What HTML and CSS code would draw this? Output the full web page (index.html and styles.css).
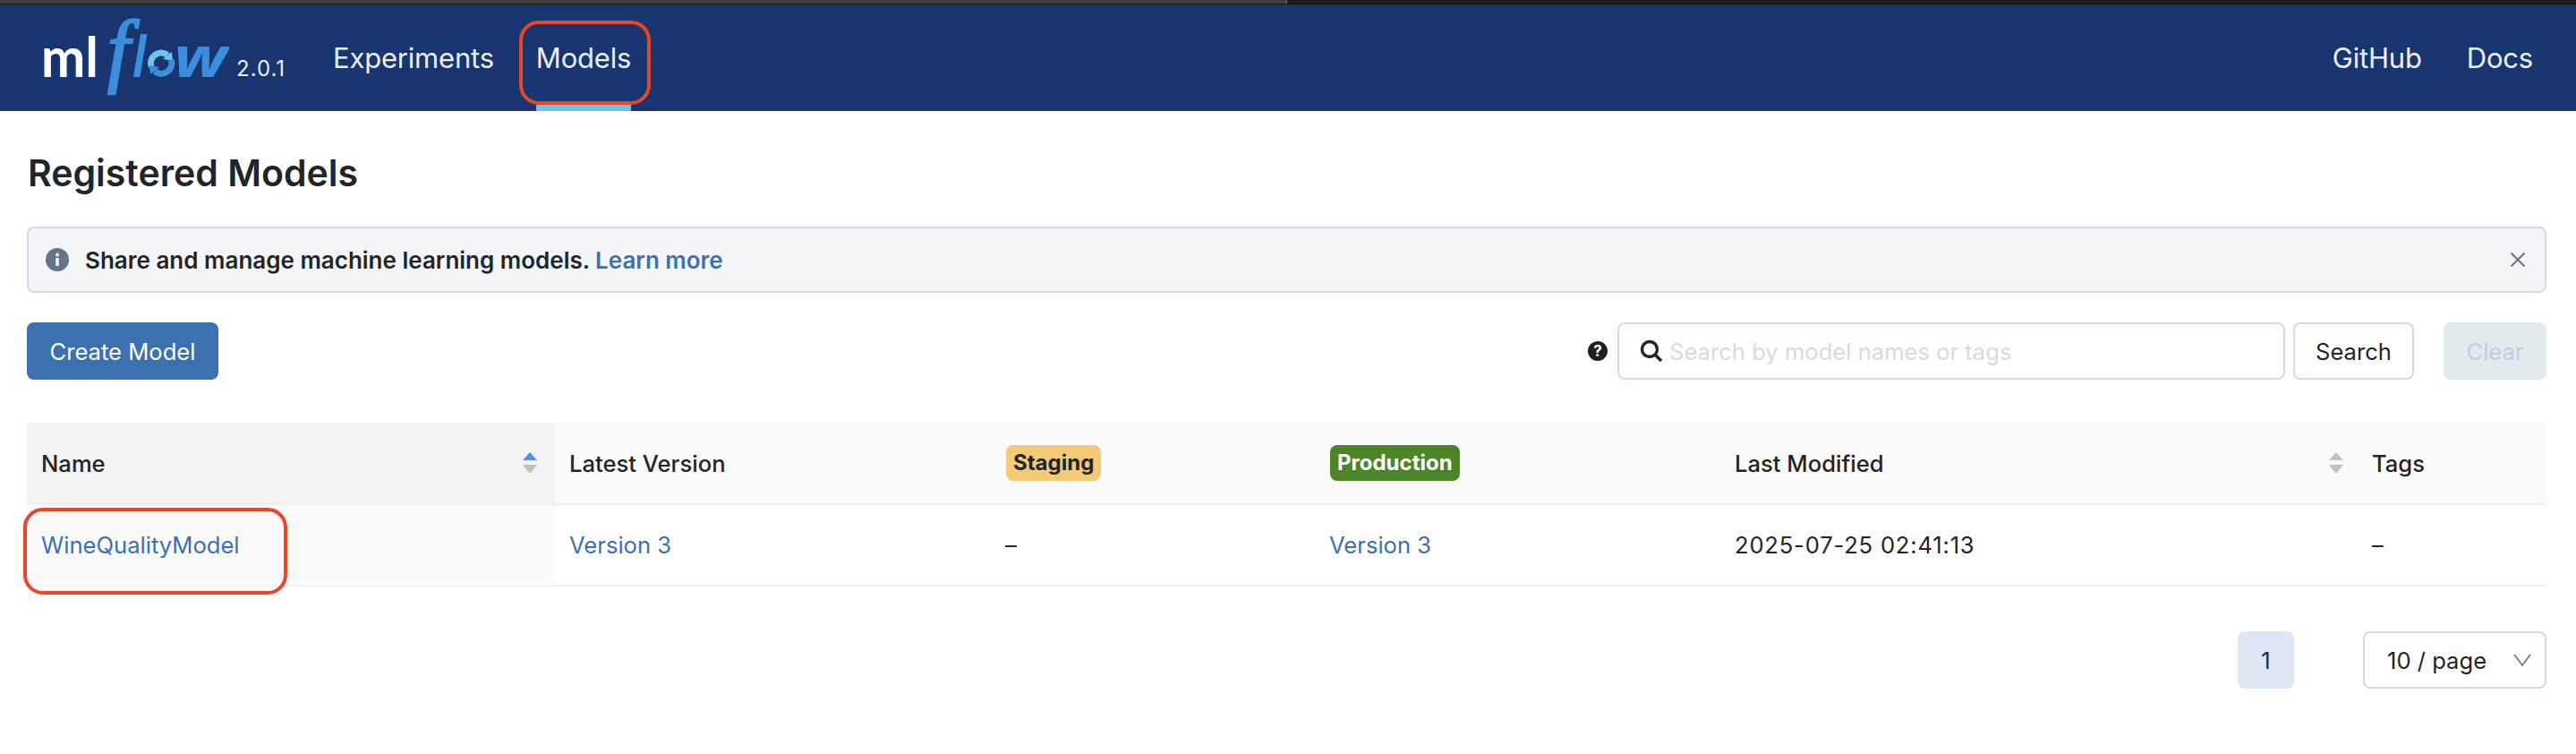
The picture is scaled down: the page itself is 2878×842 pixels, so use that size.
FILE: index.html

```html
<!DOCTYPE html>
<html lang="en">
<head>
  <meta charset="UTF-8">
  <meta name="viewport" content="width=device-width, initial-scale=1.0">
  <title>MLflow - Registered Models</title>
  <link rel="stylesheet" href="styles.css">
</head>
<body>
  <div class="topstrip"></div>

  <header class="header">
    <a class="logo" href="#">
      <svg class="logo-mark" width="210" height="119" viewBox="0 -19 210 119" role="img" aria-label="mlflow">
        <text class="logo-ml" x="0" y="62" textLength="64" lengthAdjust="spacingAndGlyphs">ml</text>
        <text class="logo-f" x="74" y="62">f</text>
        <text class="logo-l" x="102" y="62" textLength="15" lengthAdjust="spacingAndGlyphs">l</text>
        <path class="logo-ring-light" d="M123.2 50.4A11.5 11.5 0 0 1 141.4 37.7"/>
        <path class="logo-arrow-light" d="M136 42l10-8 1 10z"/>
        <path class="logo-ring-dark" d="M145.2 43A11.5 11.5 0 0 1 127 55.6"/>
        <path class="logo-arrow-dark" d="M132 51l-10 8-1-10z"/>
        <text class="logo-w" x="148" y="62" textLength="60" lengthAdjust="spacingAndGlyphs">w</text>
      </svg>
      <span class="version">2.0.1</span>
    </a>
    <nav class="nav nav-left">
      <a class="nav-link" href="#">Experiments</a>
      <a class="nav-link active" href="#">Models<span class="callout callout-nav"></span></a>
    </nav>
    <nav class="nav nav-right">
      <a class="nav-link" href="#">GitHub</a>
      <a class="nav-link" href="#">Docs</a>
    </nav>
  </header>

  <main class="main">
    <h1 class="title">Registered Models</h1>

    <div class="alert">
      <svg class="alert-icon" width="26" height="26" viewBox="0 0 26 26">
        <circle cx="13" cy="13" r="13" fill="#64748b"/>
        <circle cx="13" cy="7.5" r="2" fill="#f3f5f7"/>
        <rect x="11.2" y="11" width="3.6" height="9" rx="1" fill="#f3f5f7"/>
      </svg>
      <span class="alert-text">Share and manage machine learning models. <a href="#">Learn more</a></span>
      <svg class="alert-close" width="16" height="16" viewBox="0 0 16 16">
        <path d="M.5.5l15 15M15.5.5l-15 15" fill="none" stroke="#64748b" stroke-width="2"/>
      </svg>
    </div>

    <div class="toolbar">
      <button class="btn btn-primary">Create Model</button>
      <div class="search">
        <svg class="help-icon" width="22" height="22" viewBox="0 0 22 22">
          <circle cx="11" cy="11" r="11" fill="#1f1f1f"/>
          <text x="11" y="17" text-anchor="middle">?</text>
        </svg>
        <label class="search-box">
          <svg width="26" height="26" viewBox="0 0 26 26">
            <circle cx="11" cy="11" r="8.5" fill="none" stroke="#212529" stroke-width="3.4"/>
            <path d="M17 17l7 7" fill="none" stroke="#212529" stroke-width="3.6"/>
          </svg>
          <input type="text" placeholder="Search by model names or tags">
        </label>
        <button class="btn btn-search">Search</button>
        <button class="btn btn-clear">Clear</button>
      </div>
    </div>

    <table class="models">
      <colgroup>
        <col class="col-name">
        <col class="col-latest">
        <col class="col-staging">
        <col class="col-production">
        <col class="col-modified">
        <col class="col-tags">
      </colgroup>
      <thead>
        <tr>
          <th class="sorted">
            <div class="th-sort">Name
              <span class="sort"><i class="up on"></i><i class="down"></i></span>
            </div>
          </th>
          <th>Latest Version</th>
          <th><span class="badge badge-staging">Staging</span></th>
          <th><span class="badge badge-production">Production</span></th>
          <th>
            <div class="th-sort">Last Modified
              <span class="sort"><i class="up"></i><i class="down"></i></span>
            </div>
          </th>
          <th>Tags</th>
        </tr>
      </thead>
      <tbody>
        <tr>
          <td class="sorted"><a href="#" class="model-link">WineQualityModel<span class="callout callout-row"></span></a></td>
          <td><a href="#">Version 3</a></td>
          <td>–</td>
          <td><a href="#">Version 3</a></td>
          <td class="modified">2025-07-25 02:41:13</td>
          <td>–</td>
        </tr>
      </tbody>
    </table>

    <div class="pager">
      <span class="page-current">1</span>
      <div class="page-size">10 / page
        <svg width="20" height="14" viewBox="0 0 20 14">
          <path d="M1 1l9 12 9-12" fill="none" stroke="#64748b" stroke-width="1.6"/>
        </svg>
      </div>
    </div>
  </main>
</body>
</html>
```

FILE: styles.css

```css
* {
  box-sizing: border-box;
}
body {
  margin: 0;
  background-color: #fff;
  color: #212529;
  font-family: Inter, "Liberation Sans", sans-serif;
  font-size: 25.6px;
}
a {
  color: #3a70b5;
  text-decoration: none;
}

.topstrip {
  height: 5px;
  background: linear-gradient(to right, #3e3e3e 1436px, #5a5a5a 1436px, #5a5a5a 1438px, #1c1c1c 1438px);
  border-bottom: 1px solid #0f0f0f;
}

.header {
  display: flex;
  align-items: stretch;
  height: 119px;
  padding: 0 48px 0 46px;
  background-color: #18356f;
}
.logo {
  display: flex;
  align-items: flex-end;
  width: 326px;
  padding-bottom: 35px;
  color: #e8effa;
}
.logo-mark {
  margin-bottom: -35px;
  flex-shrink: 0;
}
.logo-ml {
  font-family: Lato, sans-serif;
  font-weight: 700;
  font-size: 62px;
  fill: #fff;
}
.logo-f {
  font-family: "Liberation Serif", serif;
  font-style: italic;
  font-size: 90px;
  fill: #3b8ede;
  stroke: #3b8ede;
  stroke-width: 2.5;
}
.logo-l, .logo-w {
  font-family: "Open Sans", sans-serif;
  font-style: italic;
  font-weight: 700;
  font-size: 62px;
  fill: #3b8ede;
}
.logo-ring-light, .logo-ring-dark {
  fill: none;
  stroke-width: 7;
}
.logo-ring-light {
  stroke: #6ac6ea;
}
.logo-ring-dark {
  stroke: #3b8ede;
}
.logo-arrow-light {
  fill: #6ac6ea;
}
.logo-arrow-dark {
  fill: #3b8ede;
}
.version {
  margin-left: 8px;
  font-size: 24px;
  letter-spacing: 1px;
  line-height: 1;
}

.nav {
  display: flex;
  gap: 50px;
}
.nav-left {
  gap: 47px;
}
.nav-right {
  margin-left: auto;
}
.nav-link {
  position: relative;
  display: flex;
  align-items: center;
  color: #e8effa;
  font-size: 31px;
  letter-spacing: -0.2px;
}
.nav-link.active {
  border-bottom: 7px solid #6ac6ea;
  padding-top: 7px;
}

.callout {
  position: absolute;
  border: 4.5px solid #ec4427;
  border-radius: 22px;
  pointer-events: none;
}
.callout-nav {
  top: 18px;
  right: -22px;
  bottom: 0;
  left: -19px;
}
.callout-row {
  top: -26px;
  right: -53px;
  bottom: -40px;
  left: -20px;
}

.main {
  padding: 44px 33px 0 30px;
}
.title {
  margin: 0 0 35px 1px;
  font-size: 41px;
  font-weight: 600;
  line-height: 50px;
}

.alert {
  display: flex;
  align-items: center;
  height: 74px;
  margin-bottom: 33px;
  padding: 0 22px 0 19px;
  background-color: #f3f5f7;
  border: 2px solid #d0dbe8;
  border-radius: 8px;
  font-size: 26px;
}
.alert-text {
  margin-left: 18px;
  font-weight: 600;
}
.alert-close {
  margin-left: auto;
}

.toolbar {
  display: flex;
  justify-content: space-between;
  margin-bottom: 48px;
}
.btn {
  height: 64px;
  border: none;
  border-radius: 8px;
  font-family: inherit;
  font-size: 25.6px;
  cursor: pointer;
}
.btn-primary {
  width: 214px;
  background-color: #3b71af;
  color: #fff;
}
.search {
  display: flex;
  align-items: center;
}
.help-icon {
  margin-right: 11px;
}
.help-icon text {
  fill: #fff;
  font-size: 17px;
  font-weight: 700;
}
.search-box {
  display: flex;
  align-items: center;
  gap: 7px;
  width: 746px;
  height: 64px;
  padding-left: 23px;
  border: 2px solid #d0dbe8;
  border-radius: 8px;
}
.search-box input {
  flex: 1;
  border: none;
  outline: none;
  padding: 0;
  font-family: inherit;
  font-size: 25.6px;
}
.search-box input::placeholder {
  color: #dadada;
}
.btn-search {
  width: 135px;
  margin-left: 9px;
  background-color: #fff;
  border: 2px solid #d0dbe8;
  color: #212529;
}
.btn-clear {
  width: 115px;
  margin-left: 33px;
  background-color: #e3eaee;
  color: #c0cedd;
}

.models {
  width: 100%;
  table-layout: fixed;
  border-collapse: collapse;
}
.col-name { width: 590px; }
.col-latest { width: 487px; }
.col-staging { width: 362px; }
.col-production { width: 453px; }
.col-modified { width: 712px; }
.models th {
  height: 91px;
  padding: 0 16px;
  background-color: #fafafa;
  border-bottom: 2px solid #f0f0f0;
  font-weight: 500;
  text-align: left;
}
.models th.sorted {
  background-color: #f3f3f3;
  border-top-left-radius: 4px;
}
.models td {
  height: 91px;
  padding: 0 16px;
  border-bottom: 2px solid #f0f0f0;
}
.models td.sorted {
  background-color: #fafafa;
}
.modified {
  letter-spacing: 0.8px;
}
.th-sort {
  display: flex;
  align-items: center;
  justify-content: space-between;
}
.sort {
  display: flex;
  flex-direction: column;
  gap: 5px;
}
.sort i {
  display: block;
  width: 0;
  height: 0;
  border-left: 8px solid transparent;
  border-right: 8px solid transparent;
}
.sort .up {
  border-bottom: 9px solid #c2c2c2;
}
.sort .up.on {
  border-bottom-color: #4a90f5;
}
.sort .down {
  border-top: 10px solid #c2c2c2;
}
.sorted .sort {
  margin-right: 4px;
}
.badge {
  display: inline-block;
  height: 40px;
  margin-left: 1px;
  padding: 0 8px;
  border-radius: 8px;
  font-size: 24px;
  font-weight: 700;
  line-height: 40px;
  vertical-align: middle;
}
.badge-staging {
  background-color: #f3cb77;
  color: #212529;
}
.badge-production {
  background-color: #4b8526;
  color: #fff;
}
.model-link {
  position: relative;
}

.pager {
  display: flex;
  justify-content: flex-end;
  gap: 77px;
  margin-top: 50px;
}
.page-current {
  display: flex;
  align-items: center;
  justify-content: center;
  width: 63px;
  height: 64px;
  background-color: #dfe7f2;
  border-radius: 8px;
  color: #0f2f5e;
}
.page-size {
  display: flex;
  align-items: center;
  justify-content: space-between;
  width: 205px;
  height: 64px;
  padding: 0 15px 0 25px;
  border: 2px solid #d0dbe8;
  border-radius: 8px;
}
```
